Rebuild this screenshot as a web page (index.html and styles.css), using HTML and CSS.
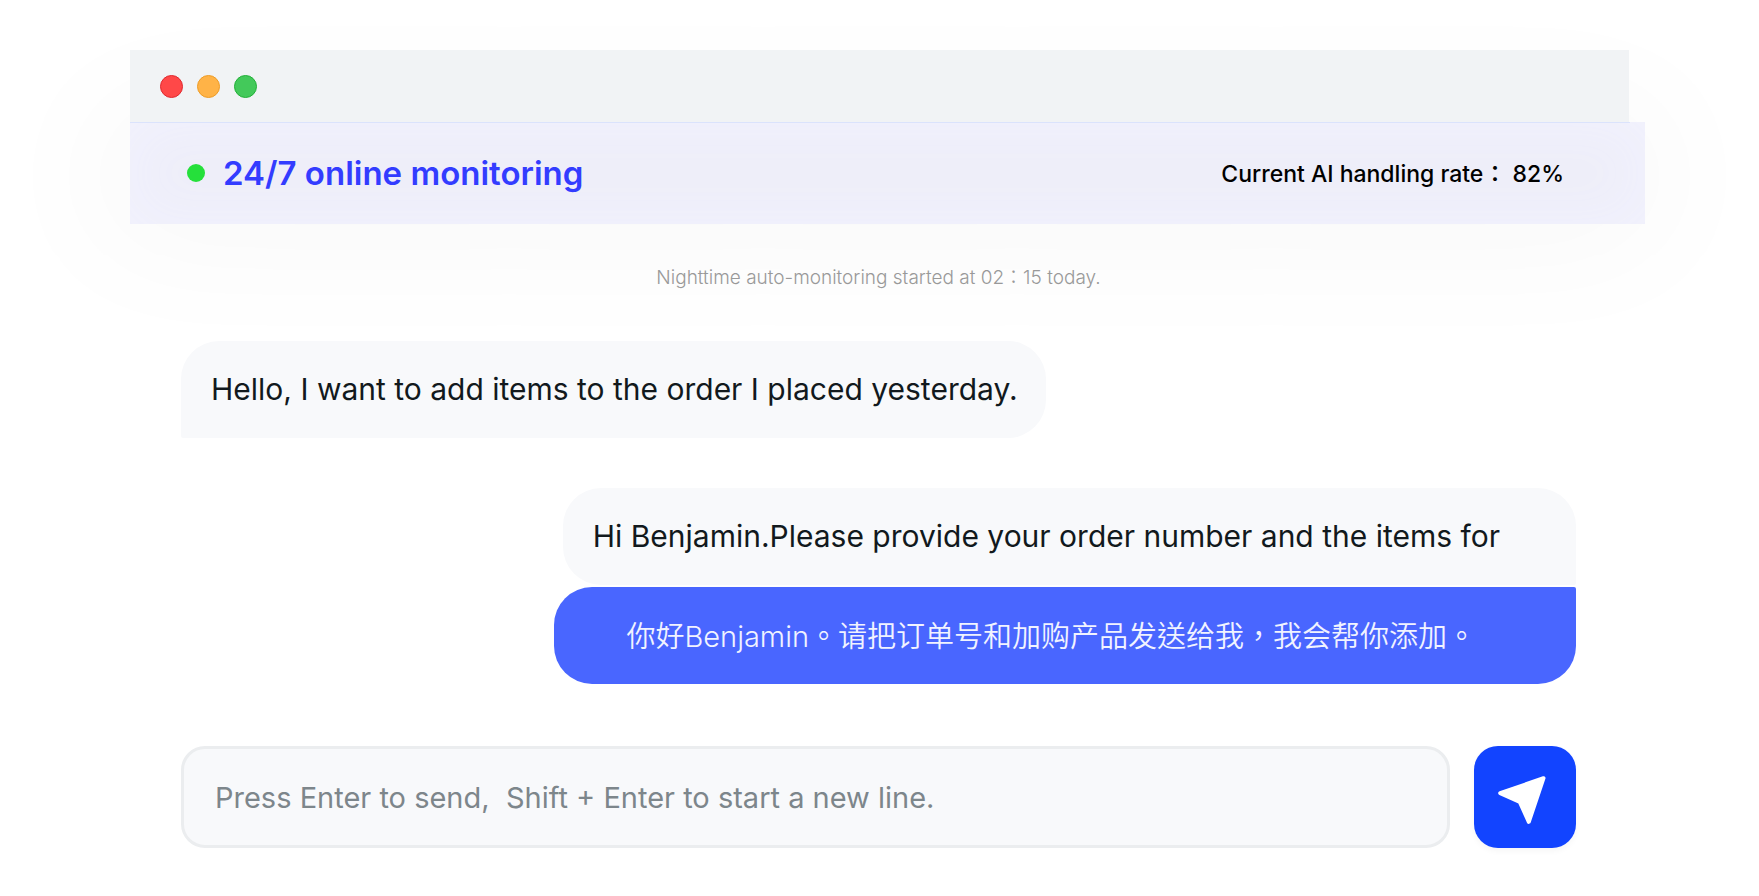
FILE: index.html
```
<!doctype html>
<html lang="en">

<head>
  <title>24/7 online monitoring</title>
  <meta charset="utf-8">
  <meta name="viewport" content="width=device-width, initial-scale=1.0">
  <link rel="stylesheet" href="styles.css">
</head>

<body>
  <div class="window">
    <div class="titlebar">
      <span class="light red"></span>
      <span class="light yellow"></span>
      <span class="light green"></span>
    </div>
    <header class="status">
      <span class="dot"></span>
      <h1>24/7 online monitoring</h1>
      <p class="rate">Current AI handling rate<span class="colon">：</span> 82%</p>
    </header>

    <main class="chat">
      <p class="notice">Nighttime auto-monitoring started at 02<span class="colon">：</span>15 today.</p>
      <p class="bubble customer">Hello, I want to add items to the order I placed yesterday.</p>
      <div class="reply">
        <p class="bubble agent">Hi Benjamin.Please provide your order number and the items for</p>
        <p class="bubble translated" lang="zh-Hant">你好Benjamin。请把订单号和加购产品发送给我，我会帮你添加。</p>
      </div>
      <form class="composer">
        <input type="text" aria-label="Message" placeholder="Press Enter to send,  Shift + Enter to start a new line.">
        <button type="button" aria-label="Send">
          <svg viewBox="0 0 102 102" aria-hidden="true">
            <path d="M69.5 32.2 26.2 47.2 45.8 56 54.8 75.8Z" />
          </svg>
        </button>
      </form>
    </main>
  </div>
</body>

</html>
```
FILE: styles.css
```
* {
  box-sizing: border-box;
}

body {
  margin: 0;
  background-color: #fff;
  color: #12191d;
  font-family: Inter, "Noto Sans CJK TC", sans-serif;
  overflow-x: hidden;
}

h1,
p {
  margin: 0;
}

.window {
  padding: 50px 114px 48px 130px;
}

/* title bar + status bar */
.titlebar {
  display: flex;
  align-items: center;
  gap: 14px;
  height: 72px;
  margin-right: 16px;
  padding: 0 30px;
  background-color: #f1f3f5;
  box-shadow: 0 90px 140px 30px rgba(0, 0, 0, 0.035);
}

.light {
  width: 23px;
  height: 23px;
  border: 1px solid;
  border-radius: 50%;
}

.red {
  background-color: #ff4848;
  border-color: #e0282e;
}

.yellow {
  background-color: #ffb347;
  border-color: #ee9c26;
}

.green {
  background-color: #43c95a;
  border-color: #22b038;
}

.status {
  position: relative;
  display: flex;
  align-items: center;
  height: 102px;
  padding: 0 81px 0 57px;
  background-color: #eeeef9;
  box-shadow: inset 0 0 60px #f2f2fe;
}

/* divider, as wide as the title bar */
.status::before {
  content: "";
  position: absolute;
  top: 0;
  left: 0;
  right: 15px;
  height: 1px;
  background-color: #dbe3fc;
}

.dot {
  width: 18px;
  height: 18px;
  margin-right: 18px;
  border-radius: 50%;
  background-color: #25e03b;
}

.status h1 {
  color: #333cff;
  font-size: 33px;
  font-weight: 600;
  line-height: 40px;
}

.rate {
  margin-left: auto;
  color: #000;
  font-size: 23px;
  font-weight: 500;
  line-height: 32px;
}

.colon {
  font-family: "Noto Sans CJK TC", sans-serif;
}

/* messages */
.chat {
  position: relative;
  display: flex;
  flex-direction: column;
  padding: 36px 69px 0 51px;
}

.notice {
  align-self: center;
  margin-bottom: 47px;
  color: #999;
  font-size: 19px;
  font-weight: 300;
  line-height: 32px;
}

.bubble {
  padding: 28px 28px 29px 30px;
  border-radius: 38px;
  background-color: #f8f9fb;
  font-size: 30px;
  line-height: 40px;
}

.customer {
  align-self: flex-start;
  border-bottom-left-radius: 2px;
}

.reply {
  display: flex;
  flex-direction: column;
  align-items: flex-end;
  gap: 2px;
  margin-top: 50px;
}

.agent {
  padding-right: 76px;
  border-bottom-right-radius: 2px;
}

.translated {
  padding: 30px 100px 27px 72px;
  border-top-right-radius: 2px;
  background-color: #4966ff;
  color: #f1f3ff;
  font-size: 29px;
  font-weight: 350;
}

/* message box */
.composer {
  display: flex;
  gap: 24px;
  margin-top: 62px;
}

.composer input {
  flex: 1;
  min-width: 0;
  height: 102px;
  padding: 0 31px;
  border: 3px solid #ebedef;
  border-radius: 24px;
  background-color: #f8f9fb;
  color: #12191d;
  font-family: inherit;
  font-size: 29px;
}

.composer input::placeholder {
  color: #7d868b;
  opacity: 1;
}

.composer button {
  flex: none;
  width: 102px;
  height: 102px;
  padding: 0;
  border: 0;
  border-radius: 24px;
  background-color: #1244ff;
  box-shadow: 0 3px 6px rgba(0, 0, 0, 0.04);
  cursor: pointer;
}

.composer svg {
  display: block;
  width: 100%;
  fill: #fff;
  stroke: #fff;
  stroke-width: 4;
  stroke-linejoin: round;
}
```
